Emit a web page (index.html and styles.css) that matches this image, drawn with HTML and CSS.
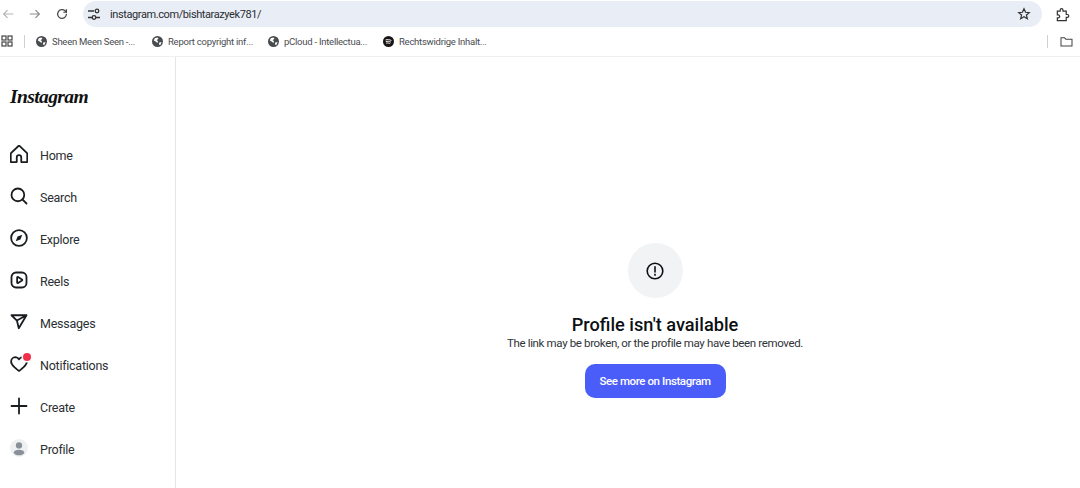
FILE: index.html
```html
<!DOCTYPE html>
<html lang="en">
<head>
    <meta charset="UTF-8">
    <meta name="viewport" content="width=device-width, initial-scale=1.0">
    <title>Instagram</title>
    <link rel="stylesheet" href="styles.css">
</head>
<body>
    <div class="toolbar">
        <svg class="tool-icon back" viewBox="0 0 16 16"><path d="M14 8H3M7.5 3.5 3 8l4.500 4.500"/></svg>
        <svg class="tool-icon forward" viewBox="0 0 16 16"><path d="M2 8h11M8.500 3.500 13 8l-4.500 4.500"/></svg>
        <svg class="tool-icon reload" viewBox="0 0 16 16"><path d="M13 8a5 5 0 1 1-1.500-3.500L13 6V2.500M13 6H9.500"/></svg>
        <div class="address-bar">
            <svg class="tune" viewBox="0 0 14 14"><path d="M1 4h6M1 10.500h4M9 10.500h4"/><circle cx="10" cy="4" r="1.800"/><circle cx="7" cy="10.500" r="1.800"/></svg>
            <span class="url">instagram.com/bishtarazyek781/</span>
            <svg class="star" viewBox="0 0 16 16"><path d="m8 2 1.800 4 4.200.4-3.200 2.800 1 4.300L8 11.200 4.200 13.500l1-4.300L2 6.400 6.200 6Z"/></svg>
        </div>
        <svg class="extension" viewBox="0 0 16 16"><path d="M2.500 4.500h3V3.300a1.500 1.500 0 0 1 3 0v1.200h3.500V8h1.200a1.500 1.500 0 0 1 0 3H12v3.500H8.500H2.500v-3h1a1.500 1.500 0 0 0 0-3h-1Z"/></svg>
    </div>

    <div class="bookmarks">
        <svg class="apps" viewBox="0 0 12 12"><rect x="1" y="1" width="4" height="4"/><rect x="7" y="1" width="4" height="4"/><rect x="1" y="7" width="4" height="4"/><rect x="7" y="7" width="4" height="4"/></svg>
        <div class="bar-sep"></div>
        <div class="bookmark bm-1">
            <svg class="favicon" viewBox="0 0 12 12"><circle cx="6" cy="6" r="6"/><path class="land" d="M3 2.500 6 1.500l1 1.500-2 1.500 1.500 1L6 7.500 4 6 2 5ZM8 7l2.500-.5L9 10 7.500 9Z"/></svg>
            <span>Sheen Meen Seen -...</span>
        </div>
        <div class="bookmark bm-2">
            <svg class="favicon" viewBox="0 0 12 12"><circle cx="6" cy="6" r="6"/><path class="land" d="M3 2.500 6 1.500l1 1.500-2 1.500 1.500 1L6 7.500 4 6 2 5ZM8 7l2.500-.5L9 10 7.500 9Z"/></svg>
            <span>Report copyright inf...</span>
        </div>
        <div class="bookmark bm-3">
            <svg class="favicon" viewBox="0 0 12 12"><circle cx="6" cy="6" r="6"/><path class="land" d="M3 2.500 6 1.500l1 1.500-2 1.500 1.500 1L6 7.500 4 6 2 5ZM8 7l2.500-.5L9 10 7.500 9Z"/></svg>
            <span>pCloud - Intellectua...</span>
        </div>
        <div class="bookmark bm-4">
            <svg class="favicon" viewBox="0 0 12 12"><circle cx="6" cy="6" r="6" fill="#191414"/><path class="spotify" d="M2.800 4.300c2-.6 4.500-.4 6.400.6M3.100 6.100c1.800-.5 3.800-.3 5.500.6M3.400 7.800c1.500-.4 3.100-.2 4.400.5"/></svg>
            <span>Rechtswidrige Inhalt...</span>
        </div>
        <div class="bar-sep right"></div>
        <svg class="folder" viewBox="0 0 14 12"><path d="M1 2h4l1.300 1.500H13V11H1Z"/></svg>
    </div>

    <div class="page">
        <div class="sidebar">
            <div class="logo">Instagram</div>
            <div class="nav">
                <div class="nav-item">
                    <svg class="nav-icon" viewBox="0 0 24 24"><path d="M22 23h-6a1 1 0 0 1-1-1v-5.500a3 3 0 1 0-6 0V22a1 1 0 0 1-1 1H2a1 1 0 0 1-1-1V11.500a1 1 0 0 1 .3-.7l10-9.500a1 1 0 0 1 1.400 0l10 9.500a1 1 0 0 1 .3.700V22a1 1 0 0 1-1 1Z"/></svg>
                    <span class="nav-label">Home</span>
                </div>
                <div class="nav-item">
                    <svg class="nav-icon" viewBox="0 0 24 24"><path d="M19 10.500A8.500 8.500 0 1 1 10.500 2a8.500 8.500 0 0 1 8.500 8.500Z"/><path d="M16.500 16.500 22 22"/></svg>
                    <span class="nav-label">Search</span>
                </div>
                <div class="nav-item">
                    <svg class="nav-icon" viewBox="0 0 24 24"><circle cx="12" cy="12" r="10.500"/><path class="solid" d="m13.900 14-6.300 2.400 2.500-6.400 6.300-2.400Z"/></svg>
                    <span class="nav-label">Explore</span>
                </div>
                <div class="nav-item">
                    <svg class="nav-icon" viewBox="0 0 24 24"><rect x="2" y="2" width="20" height="20" rx="6"/><path d="M9.500 8.600a.8.800 0 0 1 1.200-.7l5.300 3.400a.8.800 0 0 1 0 1.400l-5.300 3.400a.8.800 0 0 1-1.200-.7Z"/></svg>
                    <span class="nav-label">Reels</span>
                </div>
                <div class="nav-item">
                    <svg class="nav-icon" viewBox="0 0 24 24"><path d="M11.700 20.300 22 3H2l7.200 7.100ZM22 3 9.200 10.100"/></svg>
                    <span class="nav-label">Messages</span>
                </div>
                <div class="nav-item">
                    <svg class="nav-icon" viewBox="0 0 24 24"><path d="M16.800 2.900A5.500 5.500 0 0 0 12 5.800a5.500 5.500 0 0 0-4.800-2.900A6 6 0 0 0 1.500 9.100c0 3.300 2.400 5.300 4.700 7.400l1.900 1.700c1.300 1.200 2.600 2.300 3.400 2.800a1 1 0 0 0 1 0c.8-.5 2.100-1.600 3.400-2.800l1.900-1.700c2.300-2.100 4.700-4.100 4.700-7.400a6 6 0 0 0-5.700-6.200Z"/></svg>
                    <span class="dot"></span>
                    <span class="nav-label">Notifications</span>
                </div>
                <div class="nav-item">
                    <svg class="nav-icon" viewBox="0 0 24 24"><path d="M12 2v20M2 12h20"/></svg>
                    <span class="nav-label">Create</span>
                </div>
                <div class="nav-item">
                    <svg class="nav-icon avatar" viewBox="0 0 24 24"><circle class="avatar-bg" cx="12" cy="12" r="12"/><circle class="avatar-fg" cx="12" cy="8.500" r="4.200"/><ellipse class="avatar-fg" cx="12" cy="18" rx="7" ry="3.800"/></svg>
                    <span class="nav-label">Profile</span>
                </div>
            </div>
        </div>

        <div class="main">
            <div class="alert-circle">
                <svg class="alert-icon" viewBox="0 0 18 18"><circle cx="9" cy="9" r="7.800"/><path d="M9 4.800v5.200M9 12.200v1"/></svg>
            </div>
            <h1>Profile isn't available</h1>
            <p>The link may be broken, or the profile may have been removed.</p>
            <button>See more on Instagram</button>
        </div>
    </div>
</body>
</html>
```

FILE: styles.css
```css
:root {
    --ink: #0c1014;
    --text: #2b2f33;
    --chrome-icon: #474747;
    --omnibox: #e9eef6;
    --line: #e6e6e6;
    --blue: #4a5df9;
}

* {
    box-sizing: border-box;
}

html, body {
    height: 100%;
}

body {
    margin: 0;
    overflow: hidden;
    background: #fff;
    color: var(--ink);
    font-family: Roboto, "Open Sans", sans-serif;
    display: flex;
    flex-direction: column;
}

svg {
    display: block;
    flex: none;
}

/* browser toolbar */
.toolbar {
    height: 28px;
    display: flex;
    align-items: center;
    padding: 0 9px 0 1px;
    flex: none;
}

.tool-icon {
    width: 14px;
    height: 14px;
    fill: none;
    stroke-width: 1.4;
}

.back {
    stroke: #b4b6b9;
}

.forward {
    stroke: #8a8d90;
    margin-left: 13px;
}

.reload {
    stroke: var(--chrome-icon);
    margin-left: 13px;
}

.address-bar {
    width: 959px;
    height: 26px;
    margin-left: 14px;
    padding: 0 11px 0 4px;
    border-radius: 13px;
    background: var(--omnibox);
    display: flex;
    align-items: center;
}

.tune {
    width: 14px;
    height: 14px;
    fill: none;
    stroke: #333;
    stroke-width: 1.300;
}

.url {
    margin-left: 9px;
    font-size: 11px;
    letter-spacing: -0.400px;
    color: #2a2c30;
    flex: 1;
}

.star {
    width: 14px;
    height: 14px;
    fill: none;
    stroke: #333;
    stroke-width: 1.400;
}

.extension {
    width: 15px;
    height: 15px;
    margin-left: 13px;
    fill: none;
    stroke: #333;
    stroke-width: 1.300;
}

/* bookmarks */
.bookmarks {
    height: 29px;
    flex: none;
    display: flex;
    align-items: center;
    padding: 0 0 2px 1px;
    border-bottom: 1px solid #eeeff0;
    font-size: 9.500px;
    letter-spacing: -0.250px;
    color: #494c50;
}

.apps {
    width: 12px;
    height: 12px;
    fill: none;
    stroke: #444;
    stroke-width: 1.200;
}

.bar-sep {
    width: 1px;
    height: 13px;
    background: #cfd2d6;
    margin-left: 11px;
}

.bar-sep.right {
    margin-left: auto;
    margin-right: 12px;
}

.bookmark {
    display: flex;
    align-items: center;
    gap: 5px;
    white-space: nowrap;
}

.bm-1 {
    width: 116px;
    margin-left: 11px;
}

.bm-2 {
    width: 116px;
}

.bm-3 {
    width: 115px;
}

.favicon {
    width: 11px;
    height: 11px;
    fill: #4a4d50;
}

.land {
    fill: #fff;
}

.spotify {
    fill: none;
    stroke: #fff;
    stroke-width: 1;
}

.folder {
    width: 13px;
    height: 11px;
    margin-right: 7px;
    fill: none;
    stroke: #444;
    stroke-width: 1.100;
}

/* instagram */
.page {
    flex: 1;
    display: flex;
    min-height: 0;
}

.sidebar {
    width: 176px;
    flex: none;
    border-right: 1px solid var(--line);
    padding-left: 10px;
}

.logo {
    height: 76px;
    padding-top: 25px;
    font-family: "Liberation Serif", serif;
    font-style: italic;
    font-weight: 700;
    font-size: 19.500px;
    line-height: 30px;
    letter-spacing: -0.600px;
    color: #111;
}

.nav-item {
    position: relative;
    height: 42px;
    display: flex;
    align-items: center;
    gap: 12px;
    font-size: 12.500px;
    letter-spacing: -0.250px;
    color: var(--text);
}

.nav-label {
    padding-top: 2px;
}

.nav-icon {
    width: 18px;
    height: 18px;
    fill: none;
    stroke: #1a1d20;
    stroke-width: 2.400;
    stroke-linejoin: round;
    stroke-linecap: round;
}

.nav-icon .solid {
    fill: #1a1d20;
    stroke: none;
}

.avatar {
    stroke: none;
}

.avatar-bg {
    fill: #eef0f2;
    stroke: none;
}

.avatar-fg {
    fill: #8a9098;
    stroke: none;
}

.dot {
    position: absolute;
    left: 13px;
    top: 10px;
    width: 8px;
    height: 8px;
    border-radius: 50%;
    background: #f0304a;
    box-shadow: 0 0 0 1.500px #fff;
}

.main {
    flex: 1;
    display: flex;
    flex-direction: column;
    align-items: center;
    padding: 186px 0 0 54px;
}

.alert-circle {
    width: 55px;
    height: 55px;
    border-radius: 50%;
    background: #f2f3f5;
    display: flex;
    align-items: center;
    justify-content: center;
}

.alert-icon {
    width: 18px;
    height: 18px;
    fill: none;
    stroke: #0c1014;
    stroke-width: 1.600;
    stroke-linecap: round;
}

h1 {
    margin: 15px 0 0;
    font-size: 18.200px;
    line-height: 23px;
    font-weight: 500;
    color: var(--ink);
}

p {
    margin: 0;
    font-size: 11.500px;
    letter-spacing: -0.350px;
    line-height: 14px;
    color: #2f3337;
}

button {
    margin-top: 14px;
    width: 141px;
    height: 34px;
    border: none;
    border-radius: 10px;
    background: var(--blue);
    color: #fff;
    font-family: inherit;
    font-size: 11.500px;
    letter-spacing: -0.400px;
    font-weight: 500;
    white-space: nowrap;
}
```
